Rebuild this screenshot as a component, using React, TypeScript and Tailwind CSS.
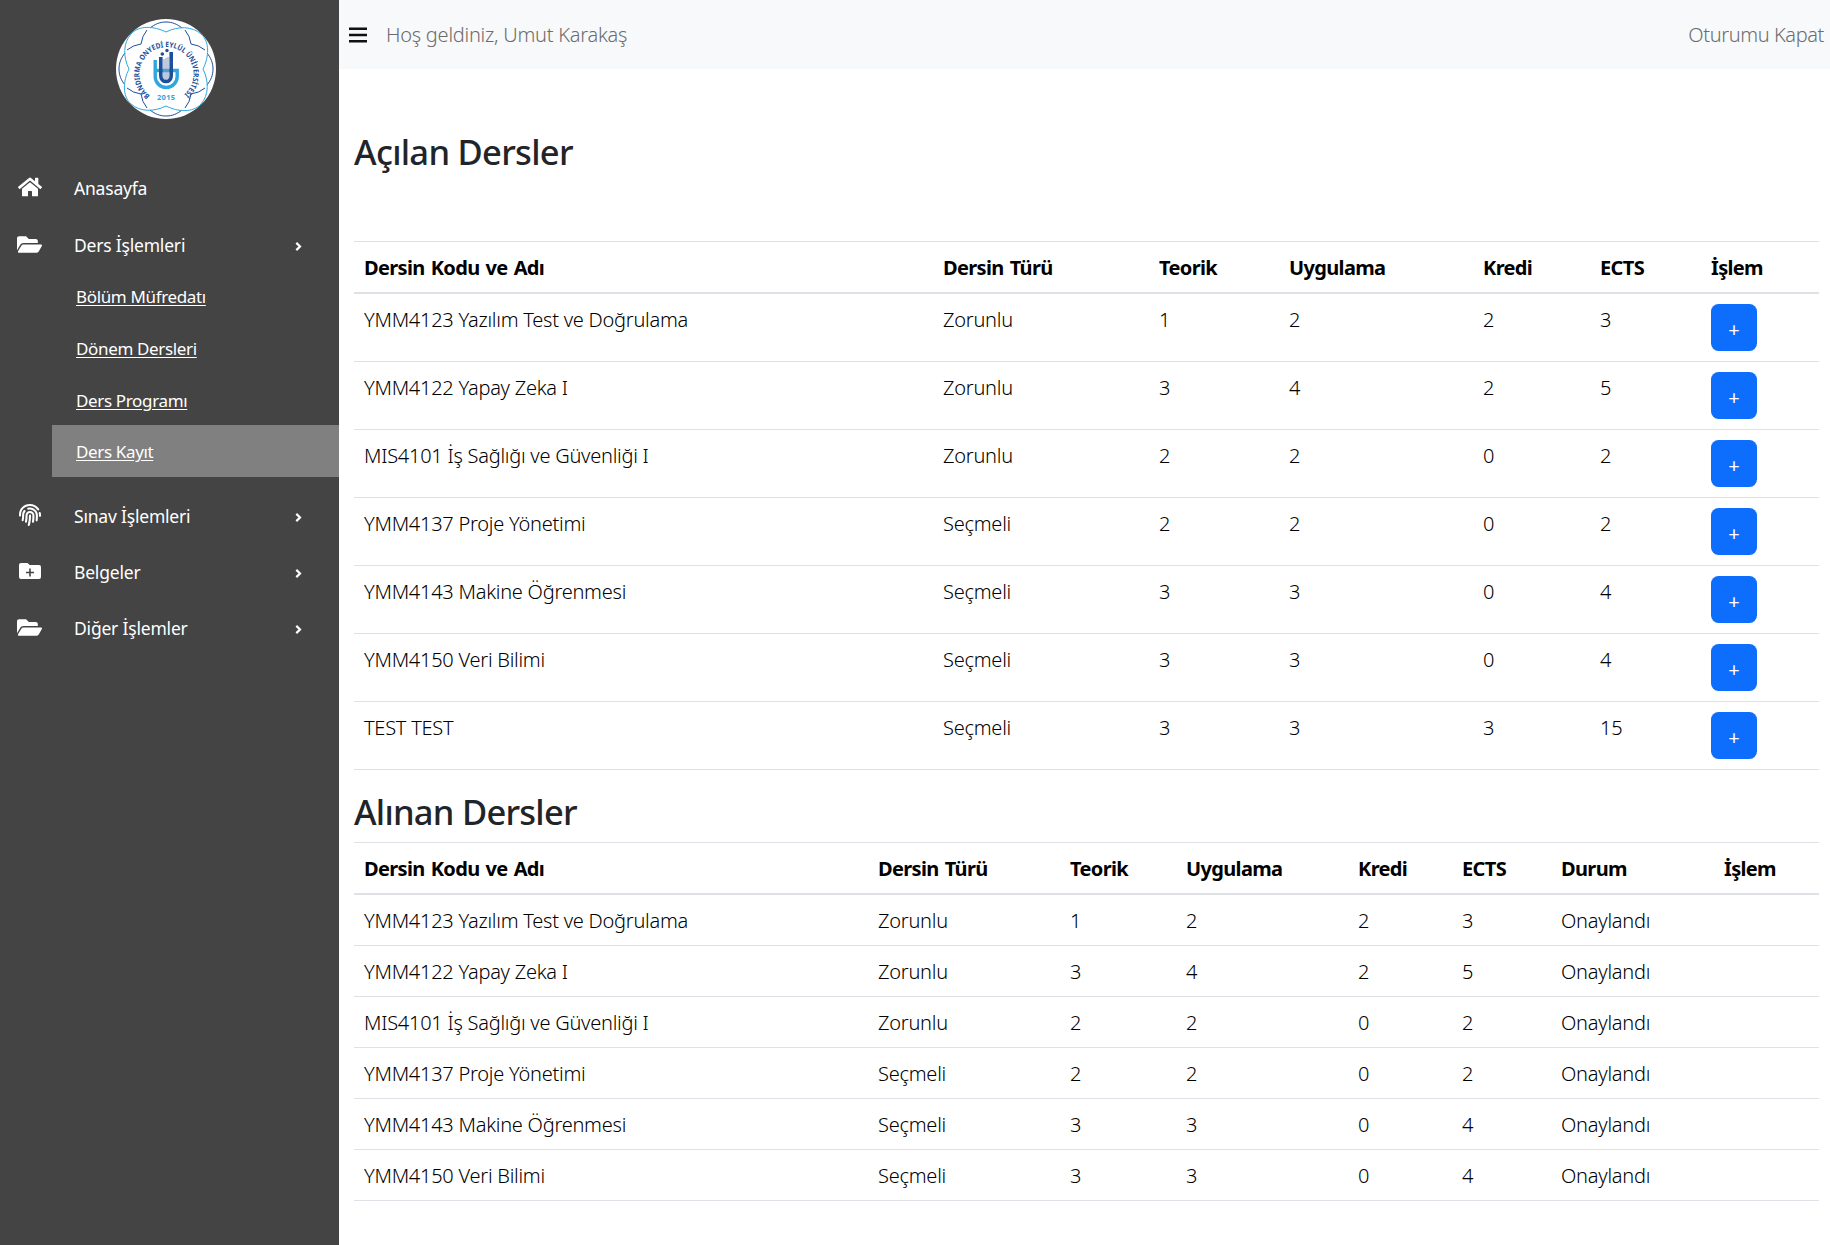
import React from "react";
import { FaHome, FaFolderOpen, FaFingerprint } from "react-icons/fa";

type Course = [string, string, number, number, number, number];

const offered: Course[] = [
  ["YMM4123 Yazılım Test ve Doğrulama", "Zorunlu", 1, 2, 2, 3],
  ["YMM4122 Yapay Zeka I", "Zorunlu", 3, 4, 2, 5],
  ["MIS4101 İş Sağlığı ve Güvenliği I", "Zorunlu", 2, 2, 0, 2],
  ["YMM4137 Proje Yönetimi", "Seçmeli", 2, 2, 0, 2],
  ["YMM4143 Makine Öğrenmesi", "Seçmeli", 3, 3, 0, 4],
  ["YMM4150 Veri Bilimi", "Seçmeli", 3, 3, 0, 4],
  ["TEST TEST", "Seçmeli", 3, 3, 3, 15],
];

const taken = offered.slice(0, 6);

function Logo() {
  return (
    <svg viewBox="0 0 100 100" className="size-[100px]" fill="none">
      <defs>
        <path id="ring" d="M34 76.5A27 27 0 1 1 67 76.5" />
      </defs>
      <circle cx="50" cy="50" r="50" fill="#fff" />
      <g stroke="#1c4f9c" strokeWidth="1">
        <path d="M34 9C39 5 44 3 50 3S61 5 66 9" />
        <path d="M34 91C39 95 44 97 50 97S61 95 66 91" />
        <path d="M9 34C5 39 3 44 3 50S5 61 9 66" />
        <path d="M91 34C95 39 97 44 97 50S95 61 91 66" />
        <path d="M11 31Q17 26 25 25Q26 17 31 11M89 31Q83 26 75 25Q74 17 69 11M11 69Q17 74 25 75Q26 83 31 89M89 69Q83 74 75 75Q74 83 69 89" />
      </g>
      <path
        stroke="#2ea7e0"
        strokeWidth="1"
        d="M50 13C38 7 23 6 15 15S7 38 13 50C7 62 6 77 15 85S38 93 50 87C62 93 77 94 85 85S93 62 87 50C93 38 94 23 85 15S62 7 50 13Z"
      />
      <text fill="#1c4f9c" fontSize="7.400" fontWeight="700" fontFamily="'Noto Sans', sans-serif">
        <textPath href="#ring" textLength="132" lengthAdjust="spacingAndGlyphs">
          BANDIRMA ONYEDİ EYLÜL ÜNİVERSİTESİ
        </textPath>
      </text>
      <path stroke="#2ea7e0" strokeWidth="3.400" d="M39.200 41V57.500A11 11 0 0 0 50.200 68.500A11 11 0 0 0 61.200 57.500V51.500H38" />
      <path stroke="#7d93b5" strokeWidth="1" d="M48 40V60M50 39V61M52 38V60" />
      <path stroke="#1c4f9c" strokeWidth="3.600" d="M44.800 38V57A5.200 5.500 0 0 0 55.200 57V33" />
      <circle cx="46.300" cy="35" r="1.800" fill="#1c4f9c" />
      <circle cx="51" cy="31.500" r="1.700" fill="#1c4f9c" />
      <text
        x="50"
        y="81"
        fill="#2ea7e0"
        fontSize="7.500"
        fontWeight="700"
        textAnchor="middle"
        textLength="18"
        fontFamily="'Noto Sans', sans-serif"
      >
        2015
      </text>
    </svg>
  );
}

function FolderPlus() {
  return (
    <svg viewBox="0 0 22 16" className="h-4 w-[22px]">
      <path fill="#fff" d="M2 0H8.500L10.700 2H20A2 2 0 0 1 22 4V14A2 2 0 0 1 20 16H2A2 2 0 0 1 0 14V2A2 2 0 0 1 2 0Z" />
      <path stroke="#444" strokeWidth="1.600" d="M7 9.500H15M11 5.500V13.500" />
    </svg>
  );
}

function Arrow() {
  return (
    <svg viewBox="0 0 7 9" className="mt-0.5 mr-[37px] h-[9px] w-[7px]" fill="none">
      <path stroke="#fff" strokeWidth="2.200" d="M1.300 0.900L5 4.500L1.300 8.100" />
    </svg>
  );
}

function MenuItem({ icon, label, arrow = true }: { icon: React.ReactNode; label: string; arrow?: boolean }) {
  return (
    <a className="flex h-14 items-center text-[17.5px] tracking-[-0.2px]">
      <span className="flex w-[59px] justify-center pb-0.5">{icon}</span>
      <span className="flex-1 pl-[15px]">{label}</span>
      {arrow && <Arrow />}
    </a>
  );
}

const subItems = ["Bölüm Müfredatı", "Dönem Dersleri", "Ders Programı", "Ders Kayıt"];

function Sidebar() {
  return (
    <aside className="w-[339px] shrink-0 bg-[#444] text-white">
      <div className="flex h-[160px] justify-center pt-[19px] pr-[7px]">
        <Logo />
      </div>
      <MenuItem icon={<FaHome className="size-6" />} label="Anasayfa" arrow={false} />
      <div className="h-[54px] pt-px">
        <MenuItem icon={<FaFolderOpen className="size-[25px]" />} label="Ders İşlemleri" />
      </div>
      <div className="mb-[11px] pl-[52px]">
        {subItems.map((s, i) => (
          <a
            key={s}
            className={
              "flex h-[51.75px] items-center pt-0.5 pl-6 text-[17px] tracking-[-0.35px] underline underline-offset-2 " +
              (i === 3 ? "bg-[#808080]" : "")
            }
          >
            {s}
          </a>
        ))}
      </div>
      <MenuItem icon={<FaFingerprint className="size-[22px]" />} label="Sınav İşlemleri" />
      <MenuItem icon={<FolderPlus />} label="Belgeler" />
      <MenuItem icon={<FaFolderOpen className="size-[25px]" />} label="Diğer İşlemler" />
    </aside>
  );
}

function HeadRow({ labels }: { labels: string[] }) {
  return (
    <tr>
      {labels.map((l) => (
        <th
          key={l}
          className="h-[53px] border-t border-b-2 border-[#dee2e6] px-2.5 pt-0.5 text-left font-bold tracking-[-0.65px] [word-spacing:1.5px]"
        >
          {l}
        </th>
      ))}
    </tr>
  );
}

export default function App() {
  return (
    <div className="flex h-[1245px] w-[1830px] overflow-hidden bg-white font-['Noto_Sans',sans-serif] text-black">
      <Sidebar />
      <div className="min-w-0 flex-1">
        <header className="flex h-[69px] items-center bg-[#f8f9fb] pr-1.5 pl-2.5 text-[20px] font-light text-[#6c6c6c]">
          <svg viewBox="0 0 18 16" className="h-4 w-[18px]">
            <path fill="#111" d="M0 0.500H18V3H0ZM0 6.700H18V9.200H0ZM0 12.900H18V15.400H0Z" />
          </svg>
          <span className="flex-1 pl-[19px] tracking-[-0.25px]">Hoş geldiniz, Umut Karakaş</span>
          <span className="tracking-[-0.4px]">Oturumu Kapat</span>
        </header>
        <main className="pr-[11px] pl-[15px]">
          <h2 className="mt-[62px] h-[41px] text-[34.5px] leading-[42px] font-medium tracking-[-0.7px] text-[#212529]">
            Açılan Dersler
          </h2>
          <table className="mt-[69px] w-[1465px] table-fixed border-separate border-spacing-0 text-[20px] leading-[30px]">
            <colgroup>
              <col className="w-[579px]" />
              <col className="w-[216px]" />
              <col className="w-[130px]" />
              <col className="w-[194px]" />
              <col className="w-[117px]" />
              <col className="w-[111px]" />
              <col className="w-[118px]" />
            </colgroup>
            <thead>
              <HeadRow labels={["Dersin Kodu ve Adı", "Dersin Türü", "Teorik", "Uygulama", "Kredi", "ECTS", "İşlem"]} />
            </thead>
            <tbody>
              {offered.map((c) => (
                <tr key={c[0]}>
                  {c.map((v, i) => (
                    <td
                      key={i}
                      className="h-[68px] border-b border-[#dee2e6] px-2.5 pt-[11px] align-top font-light tracking-[-0.25px]"
                    >
                      {v}
                    </td>
                  ))}
                  <td className="h-[68px] border-b border-[#dee2e6] px-2.5 pt-2.5 align-top">
                    <button className="flex h-[47px] w-[46px] items-center justify-center rounded-[7.5px] bg-[#0d6efd] pt-1 text-[20px] leading-none text-white">
                      +
                    </button>
                  </td>
                </tr>
              ))}
            </tbody>
          </table>
          <h2 className="mt-[21px] mb-2.5 h-[41px] text-[34.5px] leading-[42px] font-medium tracking-[-0.75px] text-[#212529]">
            Alınan Dersler
          </h2>
          <table className="w-[1465px] table-fixed border-separate border-spacing-0 text-[20px] leading-[30px]">
            <colgroup>
              <col className="w-[514px]" />
              <col className="w-[192px]" />
              <col className="w-[116px]" />
              <col className="w-[172px]" />
              <col className="w-[104px]" />
              <col className="w-[99px]" />
              <col className="w-[163px]" />
              <col className="w-[105px]" />
            </colgroup>
            <thead>
              <HeadRow
                labels={["Dersin Kodu ve Adı", "Dersin Türü", "Teorik", "Uygulama", "Kredi", "ECTS", "Durum", "İşlem"]}
              />
            </thead>
            <tbody>
              {taken.map((c) => (
                <tr key={c[0]}>
                  {[...c, "Onaylandı", ""].map((v, i) => (
                    <td
                      key={i}
                      className="h-[51px] border-b border-[#dee2e6] px-2.5 pt-[11px] pb-[9px] align-top font-light tracking-[-0.25px]"
                    >
                      {v}
                    </td>
                  ))}
                </tr>
              ))}
            </tbody>
          </table>
        </main>
      </div>
    </div>
  );
}
